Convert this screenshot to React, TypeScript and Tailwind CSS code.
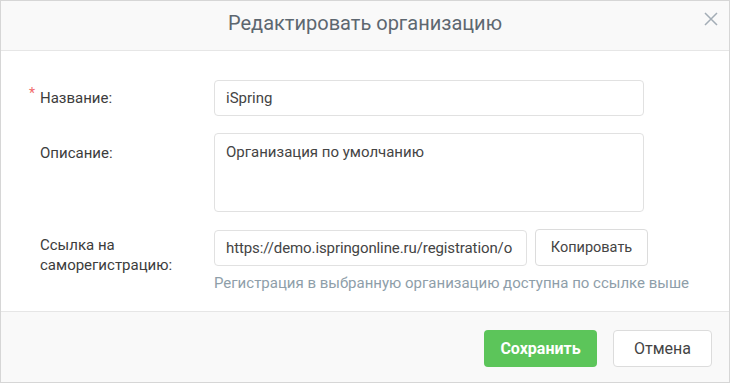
import React from 'react';

export default function App() {
  return (
    <div
      className="w-[730px] h-[383px] bg-white border border-[#d6d6d6] flex flex-col text-[#3c3c3c]"
      style={{ fontFamily: 'Roboto, "Noto Sans", sans-serif' }}
    >
      {/* Header */}
      <div className="relative h-[50px] shrink-0 bg-[#f9f9f9] border-b border-[#e6e6e6] flex items-center justify-center">
        <h1 className="text-[20px] text-[#5d6770] leading-none pb-[5px]">Редактировать организацию</h1>
        <button className="absolute right-[10px] top-[10px] w-[16px] h-[16px] flex items-center justify-center text-[#a3adb6]">
          <svg width="14" height="14" viewBox="0 0 14 14" fill="none" stroke="currentColor" strokeWidth="1.5">
            <path d="M1 1L13 13M13 1L1 13" />
          </svg>
        </button>
      </div>

      {/* Body */}
      <div className="flex-1 pl-[39px] pt-[29px] flex flex-col gap-[17px] text-[15px]">
        <div className="flex items-center">
          <label className="w-[174px] relative">
            <span className="absolute -left-[11px] -top-[4px] text-[#f16b6b] text-[14px]">*</span>
            Название:
          </label>
          <input
            defaultValue="iSpring"
            className="w-[430px] h-[36px] border border-[#e1e1e1] rounded-[4px] px-[11px] text-[#444] outline-none"
          />
        </div>

        <div className="flex items-start">
          <label className="w-[174px] pt-[9px]">Описание:</label>
          <textarea
            defaultValue="Организация по умолчанию"
            className="w-[430px] h-[79px] border border-[#e1e1e1] rounded-[4px] px-[11px] py-[7px] text-[#444] outline-none resize-none leading-[22px]"
          />
        </div>

        <div className="flex items-start">
          <label className="w-[174px] leading-[20px] pt-[6px]">
            Ссылка на
            <br />
            саморегистрацию:
          </label>
          <div className="flex flex-col">
            <div className="flex items-center gap-[8px]">
              <input
                readOnly
                value="https://demo.ispringonline.ru/registration/o"
                className="w-[313px] h-[36px] border border-[#e1e1e1] rounded-[4px] pl-[11px] pr-[6px] text-[#444] tracking-[-0.1px] outline-none"
              />
              <button className="w-[113px] h-[37px] border border-[#dcdcdc] rounded-[4px] bg-white text-[14.5px] text-[#444]">
                Копировать
              </button>
            </div>
            <p className="text-[#8e9ea9] mt-[6px]">Регистрация в выбранную организацию доступна по ссылке выше</p>
          </div>
        </div>
      </div>

      {/* Footer */}
      <div className="h-[71px] shrink-0 bg-[#f9f9f9] border-t border-[#e6e6e6] flex items-start justify-end gap-[16px] pt-[18px] pr-[17px]">
        <button className="w-[113px] h-[37px] rounded-[4px] bg-[#5cc55a] text-white text-[16px] font-bold">
          Сохранить
        </button>
        <button className="w-[99px] h-[37px] rounded-[4px] bg-white border border-[#dcdcdc] text-[16px] text-[#444]">
          Отмена
        </button>
      </div>
    </div>
  );
}
